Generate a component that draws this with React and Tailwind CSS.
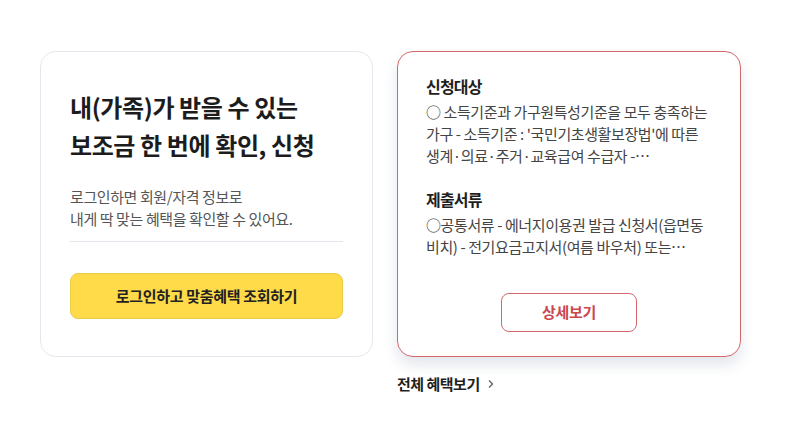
import React from 'react';

const FONT = { fontFamily: '"Noto Sans CJK KR", "Noto Sans", sans-serif' };

const InfoBlock = ({ title, lines, className }) => (
  <div className={className}>
    <h3 className="text-[16px] font-bold leading-[22px] text-[#1f1f1f] tracking-[-0.8px]">{title}</h3>
    <div className="mt-1 text-[15px] leading-[22px] text-[#444] tracking-[-0.4px]">
      {lines.map((line, i) => (
        <p key={i} className="whitespace-nowrap">{line}</p>
      ))}
    </div>
  </div>
);

export default function App() {
  return (
    <div className="min-h-[429px] w-[787px] bg-white pl-[40px] pt-[51px]" style={FONT}>
      <div className="flex gap-[24px]">
        {/* 로그인 안내 카드 */}
        <div className="flex h-[306px] w-[333px] flex-col rounded-[16px] border border-[#e6e7ee] bg-white px-[29px] pt-[36px]">
          <h2 className="text-[24px] font-bold leading-[38px] tracking-[-0.4px] text-[#1c1c1c]">
            내(가족)가 받을 수 있는
            <br />
            보조금 한 번에 확인, 신청
          </h2>
          <p className="mt-[22px] text-[15px] leading-[22px] tracking-[-0.4px] text-[#555]">
            로그인하면 회원/자격 정보로
            <br />
            내게 딱 맞는 혜택을 확인할 수 있어요.
          </p>
          <div className="mt-[11px] h-px bg-[#e4e5ec]" />
          <button className="mt-[31px] h-[46px] w-full rounded-[8px] border border-[#eacb45] bg-[#ffdb4a] text-[15px] font-bold tracking-[-0.3px] text-[#222]">
            로그인하고 맞춤혜택 조회하기
          </button>
        </div>

        {/* 혜택 상세 카드 */}
        <div className="flex flex-col">
          <div className="flex h-[306px] w-[344px] flex-col rounded-[16px] border-[1.5px] border-[#d4686d] bg-white px-[28px] pt-[23px] shadow-[0_8px_14px_rgba(40,60,110,0.13)]">
            <InfoBlock
              title="신청대상"
              lines={[
                '○ 소득기준과 가구원특성기준을 모두 충족하는',
                "가구 - 소득기준 : '국민기초생활보장법'에 따른",
                '생계·의료·주거·교육급여 수급자 -…',
              ]}
            />
            <InfoBlock
              className="mt-[21px]"
              title="제출서류"
              lines={[
                '○공통서류 - 에너지이용권 발급 신청서(읍면동',
                '비치) - 전기요금고지서(여름 바우처) 또는…',
              ]}
            />
            <div className="mt-[35px] flex justify-center">
              <button className="h-[39px] w-[136px] rounded-[8px] border-[1.5px] border-[#d4686d] bg-white text-[15px] font-bold tracking-[-0.3px] text-[#c9474d]">
                상세보기
              </button>
            </div>
          </div>
          <a className="mt-[16px] flex items-center gap-[7px] text-[15px] font-bold tracking-[-0.5px] text-[#1f1f1f]">
            전체 혜택보기
            <svg width="8" height="10" viewBox="0 0 8 10" fill="none">
              <path d="M2 1.5 5.5 5 2 8.5" stroke="#666" strokeWidth="1.4" />
            </svg>
          </a>
        </div>
      </div>
    </div>
  );
}
